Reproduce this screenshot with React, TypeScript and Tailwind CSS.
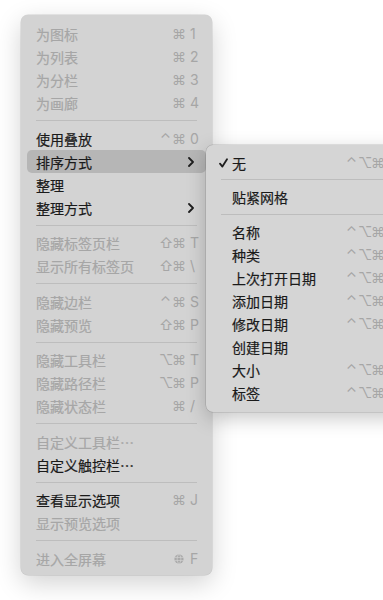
import React from "react";

type Item =
  | { type: "sep"; size: 11 | 12 | 13 }
  | {
      type: "item";
      label: string;
      disabled?: boolean;
      mods?: string[];
      key?: string;
      globe?: boolean;
      sub?: boolean;
      active?: boolean;
    };

const main: Item[] = [
  { type: "item", label: "为图标", disabled: true, mods: ["⌘"], key: "1" },
  { type: "item", label: "为列表", disabled: true, mods: ["⌘"], key: "2" },
  { type: "item", label: "为分栏", disabled: true, mods: ["⌘"], key: "3" },
  { type: "item", label: "为画廊", disabled: true, mods: ["⌘"], key: "4" },
  { type: "sep", size: 13 },
  { type: "item", label: "使用叠放", mods: ["⌃", "⌘"], key: "0" },
  { type: "item", label: "排序方式", sub: true, active: true },
  { type: "item", label: "整理" },
  { type: "item", label: "整理方式", sub: true },
  { type: "sep", size: 12 },
  { type: "item", label: "隐藏标签页栏", disabled: true, mods: ["⇧", "⌘"], key: "T" },
  { type: "item", label: "显示所有标签页", disabled: true, mods: ["⇧", "⌘"], key: "\\" },
  { type: "sep", size: 13 },
  { type: "item", label: "隐藏边栏", disabled: true, mods: ["⌃", "⌘"], key: "S" },
  { type: "item", label: "隐藏预览", disabled: true, mods: ["⇧", "⌘"], key: "P" },
  { type: "sep", size: 12 },
  { type: "item", label: "隐藏工具栏", disabled: true, mods: ["⌥", "⌘"], key: "T" },
  { type: "item", label: "隐藏路径栏", disabled: true, mods: ["⌥", "⌘"], key: "P" },
  { type: "item", label: "隐藏状态栏", disabled: true, mods: ["⌘"], key: "/" },
  { type: "sep", size: 13 },
  { type: "item", label: "自定义工具栏…", disabled: true },
  { type: "item", label: "自定义触控栏…" },
  { type: "sep", size: 12 },
  { type: "item", label: "查看显示选项", mods: ["⌘"], key: "J" },
  { type: "item", label: "显示预览选项", disabled: true },
  { type: "sep", size: 13 },
  { type: "item", label: "进入全屏幕", disabled: true, globe: true, key: "F" },
];

type SubItem =
  | { type: "sep"; size: 11 | 12 }
  | { type: "item"; label: string; checked?: boolean; key?: string };

const sub: SubItem[] = [
  { type: "item", label: "无", checked: true, key: "0" },
  { type: "sep", size: 11 },
  { type: "item", label: "贴紧网格" },
  { type: "sep", size: 12 },
  { type: "item", label: "名称", key: "1" },
  { type: "item", label: "种类", key: "2" },
  { type: "item", label: "上次打开日期", key: "3" },
  { type: "item", label: "添加日期", key: "4" },
  { type: "item", label: "修改日期", key: "5" },
  { type: "item", label: "创建日期" },
  { type: "item", label: "大小", key: "6" },
  { type: "item", label: "标签", key: "7" },
];

const cjk =
  "font-['Noto_Sans_CJK_SC','Noto_Sans',sans-serif] font-normal [-webkit-text-stroke:0.2px_currentColor]";
const sym = "font-['Inter','DejaVu_Sans','Noto_Sans_CJK_SC',sans-serif]";

function Globe() {
  return (
    <svg width="10" height="10" viewBox="0 0 10 10" className="block">
      <circle cx="5" cy="5" r="4.6" fill="#a9a9a9" />
      <ellipse cx="5" cy="5" rx="1.9" ry="4.4" fill="none" stroke="#d3d3d3" strokeWidth="0.7" />
      <line x1="0.5" y1="3.4" x2="9.5" y2="3.4" stroke="#d3d3d3" strokeWidth="0.7" />
      <line x1="0.5" y1="6.6" x2="9.5" y2="6.6" stroke="#d3d3d3" strokeWidth="0.7" />
    </svg>
  );
}

function Sep({ size }: { size: number }) {
  const cls =
    size === 13 ? "pt-[6px] pb-[6px]" : size === 12 ? "pt-[6px] pb-[5px]" : "pt-[5px] pb-[5px]";
  return (
    <div className={cls}>
      <div className="mx-[9px] h-px bg-[#bdbdbd]" />
    </div>
  );
}

function Shortcut({ mods, keyChar, globe }: { mods?: string[]; keyChar?: string; globe?: boolean }) {
  if (!mods && !keyChar && !globe) return null;
  return (
    <div className={`flex items-center text-[14px] text-[#a6a6a6] ${sym}`}>
      <div className="flex items-center justify-end mr-[5px]">
        {globe ? (
          <div className="w-[13px] flex justify-center">
            <Globe />
          </div>
        ) : (
          mods?.map((m, i) => (
            <span key={i} className="w-[13px] text-center leading-none">
              {m}
            </span>
          ))
        )}
      </div>
      <span className="w-[7px] whitespace-nowrap leading-none">{keyChar}</span>
    </div>
  );
}

function Chevron() {
  return (
    <svg width="6" height="10" viewBox="0 0 6 10" className="block mr-[3px]">
      <path d="M1 1 L5 5 L1 9" fill="none" stroke="#1e1e1e" strokeWidth="1.8" strokeLinecap="round" strokeLinejoin="round" />
    </svg>
  );
}

function Check() {
  return (
    <svg width="9" height="10" viewBox="0 0 9 10" className="block">
      <path d="M1 5.6 L3.4 8.6 L8 1.2" fill="none" stroke="#1e1e1e" strokeWidth="1.8" strokeLinecap="round" strokeLinejoin="round" />
    </svg>
  );
}

export default function App() {
  return (
    <div className="relative w-[383px] h-[600px] overflow-hidden bg-white">
      <div className="pt-[15px] pl-[21px]">
        <div className="w-[191px] rounded-[7px] bg-[#d3d3d3] px-[6px] pt-[7px] pb-[5px] shadow-[0_0_0_0.5px_rgba(0,0,0,0.15),0_8px_26px_rgba(0,0,0,0.18)]">
          {main.map((it, i) =>
            it.type === "sep" ? (
              <Sep key={i} size={it.size} />
            ) : (
              <div
                key={i}
                className={`flex h-[23px] items-center rounded-[5px] px-[9px] ${it.active ? "bg-[#b6b6b6]" : ""}`}
              >
                <span
                  className={`flex-1 text-[14px] leading-none whitespace-nowrap ${cjk} ${
                    it.disabled ? "text-[#a6a6a6]" : "text-[#1a1a1a]"
                  }`}
                >
                  {it.label}
                </span>
                {it.sub ? <Chevron /> : <Shortcut mods={it.mods} keyChar={it.key} globe={it.globe} />}
              </div>
            )
          )}
        </div>
      </div>

      <div className="absolute left-[206px] top-[145px] w-[205px] rounded-[7px] bg-[#d5d5d5] px-[6px] pt-[6px] pb-[8px] shadow-[0_0_0_0.5px_rgba(0,0,0,0.18),0_6px_20px_rgba(0,0,0,0.22)]">
        {sub.map((it, i) =>
          it.type === "sep" ? (
            <Sep key={i} size={it.size} />
          ) : (
            <div key={i} className="flex h-[23px] items-center pl-[7px] pr-[9px]">
              <div className="w-[13px] flex items-center">{it.checked ? <Check /> : null}</div>
              <span className={`flex-1 text-[14px] leading-none whitespace-nowrap text-[#1a1a1a] ${cjk}`}>
                {it.label}
              </span>
              {it.key ? <Shortcut mods={["⌃", "⌥", "⌘"]} keyChar={it.key} /> : null}
            </div>
          )
        )}
      </div>
    </div>
  );
}
